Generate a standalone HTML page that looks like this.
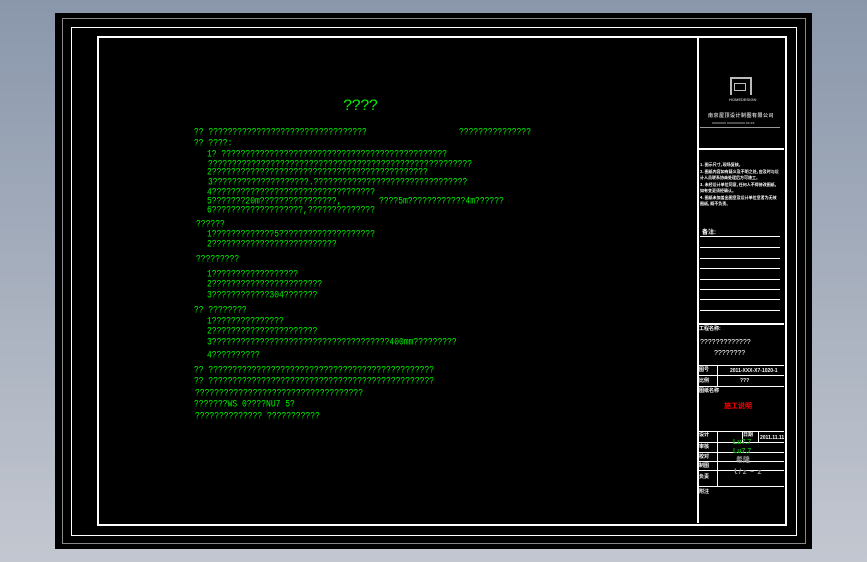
<!DOCTYPE html>
<html><head><meta charset="utf-8"><style>
html,body{margin:0;padding:0}
body{width:867px;height:562px;position:relative;overflow:hidden;background:linear-gradient(#8a97ab,#c3c7d0);font-family:"Liberation Mono","Noto Sans CJK SC",monospace}
.a{position:absolute}
.g{position:absolute;color:#00f000;font-size:8px;line-height:8px;white-space:pre;font-family:"Liberation Mono",monospace;transform:scaleY(1.25);transform-origin:0 0}
.w{position:absolute;background:#fff}
.t{position:absolute;color:#fff;font-size:5px;line-height:6px;white-space:pre;font-family:"Liberation Sans","Noto Sans CJK SC",sans-serif;font-weight:bold}
.n{position:absolute;color:#fff;font-size:4px;line-height:6.5px;width:80px;overflow:hidden;font-family:"Noto Sans CJK SC",sans-serif;font-weight:bold}
</style></head><body>
<div class="a" style="left:55px;top:13px;width:757px;height:536px;background:#000"></div>
<div class="a" style="left:62px;top:18px;width:742px;height:524px;border:1px solid #888"></div>
<div class="a" style="left:71px;top:27px;width:724px;height:507px;border:1px solid #fff"></div>
<div class="a" style="left:97px;top:36px;width:686px;height:486px;border:2px solid #fff"></div>
<div class="w" style="left:697px;top:37px;width:2px;height:486px"></div>

<div class="g" style="left:343px;top:98px;font-size:16px;line-height:16px;letter-spacing:-1px;transform:none">????</div>
<div class="g" style="left:194px;top:128px">?? ?????????????????????????????????</div>
<div class="g" style="left:459px;top:128px">???????????????</div>
<div class="g" style="left:194px;top:139px">?? ????:</div>
<div class="g" style="left:207px;top:150px">1? ???????????????????????????????????????????????</div>
<div class="g" style="left:208px;top:160px">???????????????????????????????????????????????????????</div>
<div class="g" style="left:207px;top:168px">2?????????????????????????????????????????????</div>
<div class="g" style="left:208px;top:178px">3????????????????????.????????????????????????????????</div>
<div class="g" style="left:207px;top:188px">4??????????????????????????????????</div>
<div class="g" style="left:207px;top:197px">5???????20m????????????????,</div>
<div class="g" style="left:379px;top:197px">????5m????????????4m??????</div>
<div class="g" style="left:207px;top:206px">6???????????????????,??????????????</div>
<div class="g" style="left:196px;top:220px">??????</div>
<div class="g" style="left:207px;top:230px">1?????????????5????????????????????</div>
<div class="g" style="left:207px;top:240px">2??????????????????????????</div>
<div class="g" style="left:196px;top:255px">?????????</div>
<div class="g" style="left:207px;top:270px">1??????????????????</div>
<div class="g" style="left:207px;top:280px">2???????????????????????</div>
<div class="g" style="left:207px;top:291px">3????????????304???????</div>
<div class="g" style="left:194px;top:306px">?? ????????</div>
<div class="g" style="left:207px;top:317px">1???????????????</div>
<div class="g" style="left:207px;top:327px">2??????????????????????</div>
<div class="g" style="left:207px;top:338px">3?????????????????????????????????????400mm?????????</div>
<div class="g" style="left:207px;top:351px">4??????????</div>
<div class="g" style="left:194px;top:366px">?? ???????????????????????????????????????????????</div>
<div class="g" style="left:194px;top:377px">?? ???????????????????????????????????????????????</div>
<div class="g" style="left:195px;top:389px">???????????????????????????????????</div>
<div class="g" style="left:194px;top:400px">???????WS 0????NU7 5?</div>
<div class="g" style="left:195px;top:412px">?????????????? ???????????</div>

<!-- title block -->
<div class="a" style="left:730px;top:77px;width:18px;height:16px;border:2px solid #bbb;border-bottom:none"></div>
<div class="a" style="left:734px;top:83px;width:10px;height:6px;border:1px solid #bbb"></div>
<div class="t" style="left:729px;top:97px;font-size:4px;color:#aaa">HOMEDESIGN</div>
<div class="t" style="left:708px;top:113px;letter-spacing:0.5px;color:#ccc">南京屋顶设计制图有限公司</div>
<div class="t" style="left:712px;top:120px;font-size:3px;color:#aaa">XXXXXXX XXXXXXXXX XX.XX</div>
<div class="w" style="left:700px;top:127px;width:80px;height:1px;background:#999"></div>
<div class="w" style="left:698px;top:148px;width:86px;height:2px"></div>
<div class="n" style="left:700px;top:162px">1. 图示尺寸, 现场复核。<br>2. 图纸内容如有疑义及不明之处, 应及时与设计人员联系协商处理后方可施工。<br>3. 未经设计单位同意, 任何人不得修改图纸, 如有变更须经确认。<br>4. 图纸未加盖出图章及设计单位章者为无效图纸, 概不负责。</div>
<div class="t" style="left:702px;top:230px;font-size:6px">备注:</div>
<div class="w" style="left:700px;top:236px;width:80px;height:1px"></div>
<div class="w" style="left:700px;top:247px;width:80px;height:1px"></div>
<div class="w" style="left:700px;top:258px;width:80px;height:1px"></div>
<div class="w" style="left:700px;top:268px;width:80px;height:1px"></div>
<div class="w" style="left:700px;top:279px;width:80px;height:1px"></div>
<div class="w" style="left:700px;top:289px;width:80px;height:1px"></div>
<div class="w" style="left:700px;top:299px;width:80px;height:1px"></div>
<div class="w" style="left:700px;top:310px;width:80px;height:1px"></div>
<div class="w" style="left:698px;top:323px;width:86px;height:2px"></div>
<div class="t" style="left:699px;top:326px">工程名称:</div>
<div class="t" style="left:700px;top:340px;font-size:7px;font-weight:normal">?????????????</div>
<div class="t" style="left:714px;top:351px;font-size:7px;font-weight:normal">????????</div>
<div class="w" style="left:698px;top:365px;width:86px;height:1px"></div>
<div class="t" style="left:699px;top:367px">图号</div>
<div class="t" style="left:730px;top:368px">2011-XXX-X7-1020-1</div>
<div class="w" style="left:698px;top:375px;width:86px;height:1px"></div>
<div class="t" style="left:699px;top:378px">比例</div>
<div class="t" style="left:740px;top:378px">???</div>
<div class="w" style="left:717px;top:365px;width:1px;height:21px"></div>
<div class="w" style="left:698px;top:386px;width:86px;height:1px"></div>
<div class="t" style="left:699px;top:388px">图纸名称</div>
<div class="t" style="left:724px;top:404px;color:#f00;font-size:7px">施工说明</div>
<div class="w" style="left:698px;top:431px;width:86px;height:1px"></div>
<div class="t" style="left:699px;top:432px">设计</div>
<div class="t" style="left:743px;top:432px">日期</div>
<div class="t" style="left:760px;top:435px">2011.11.11</div>
<div class="w" style="left:742px;top:431px;width:1px;height:11px"></div>
<div class="w" style="left:758px;top:431px;width:1px;height:11px"></div>
<div class="w" style="left:698px;top:442px;width:86px;height:1px"></div>
<div class="t" style="left:699px;top:444px">审核</div>
<div class="t" style="left:733px;top:440px;color:#1a1;font-size:7px">Lu7.7</div>
<div class="w" style="left:698px;top:452px;width:86px;height:1px"></div>
<div class="t" style="left:699px;top:454px">校对</div>
<div class="t" style="left:733px;top:449px;color:#1a1;font-size:7px">Lu7.7</div>
<div class="w" style="left:698px;top:461px;width:86px;height:1px"></div>
<div class="t" style="left:699px;top:463px">制图</div>
<div class="t" style="left:736px;top:458px;color:#999;font-size:7px">希隆</div>
<div class="w" style="left:698px;top:470px;width:86px;height:1px"></div>
<div class="t" style="left:699px;top:474px">负责</div>
<div class="t" style="left:732px;top:470px;color:#999;font-size:7px">ｌ/ｚ ~ ｚ</div>
<div class="w" style="left:698px;top:486px;width:86px;height:1px"></div>
<div class="w" style="left:717px;top:431px;width:1px;height:55px"></div>
<div class="t" style="left:699px;top:489px">附注</div>
</body></html>
